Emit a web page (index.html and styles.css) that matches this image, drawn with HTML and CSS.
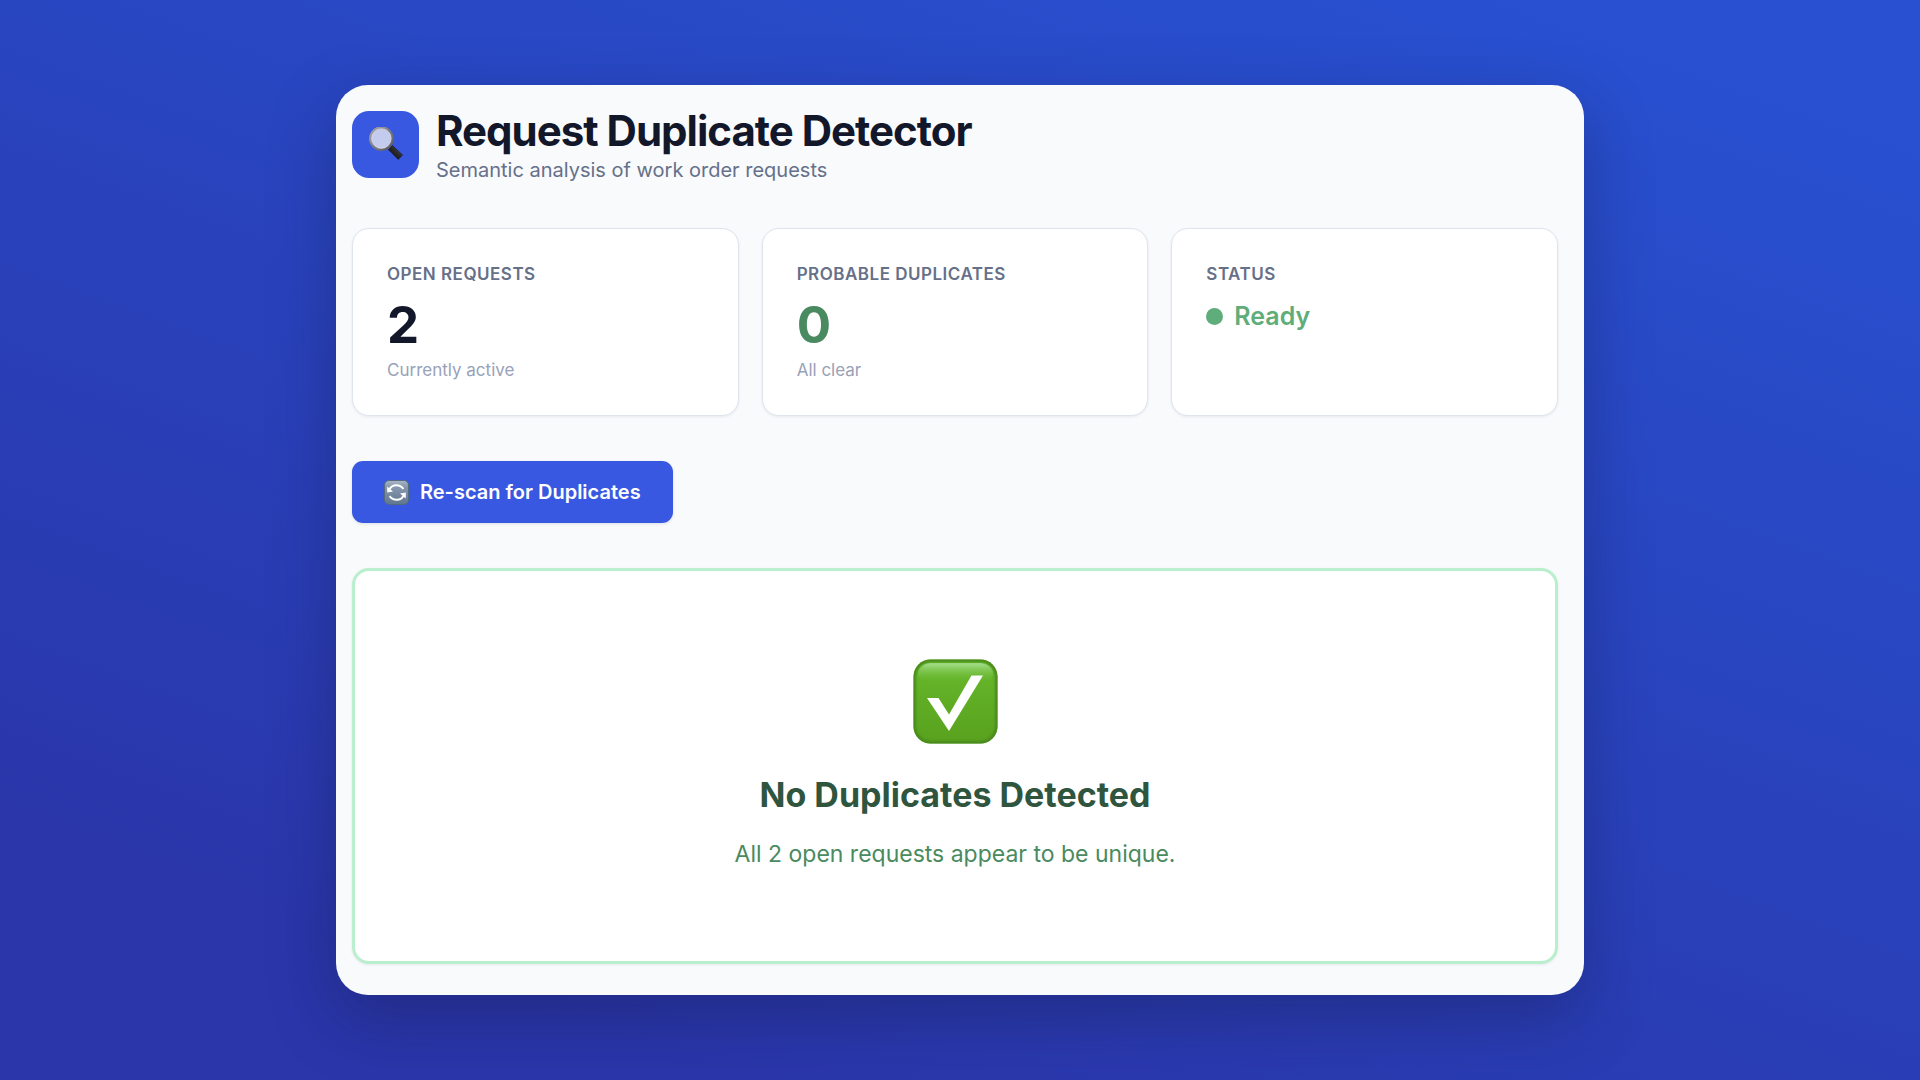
FILE: index.html
```html
<!DOCTYPE html>
<html lang="en">
<head>
<meta charset="utf-8">
<meta name="viewport" content="width=device-width, initial-scale=1">
<title>Request Duplicate Detector</title>
<link rel="stylesheet" href="styles.css">
</head>
<body>
<main class="app">
  <header class="header">
    <div class="logo">
      <svg class="logo-icon" viewBox="0 0 34 34" aria-hidden="true">
        <defs>
          <linearGradient id="rim" x1="0" y1="0" x2="1" y2="1">
            <stop offset="0" stop-color="#a9a9ad"/>
            <stop offset="1" stop-color="#55565a"/>
          </linearGradient>
          <linearGradient id="handle" x1="0" y1="1" x2="1" y2="0">
            <stop offset="0" stop-color="#0c0c0e"/>
            <stop offset=".55" stop-color="#2a2a2c"/>
            <stop offset="1" stop-color="#77777a"/>
          </linearGradient>
        </defs>
        <path d="M19.5 19.5 23 23" stroke="#77787c" stroke-width="3"/>
        <path d="M19.4 22.6 23.4 18.6 33.6 28 29.2 32.4z" fill="url(#handle)" stroke="#111" stroke-width=".6" stroke-linejoin="round"/>
        <circle cx="12.4" cy="11.6" r="11" fill="#c3ccee" stroke="url(#rim)" stroke-width="2.6"/>
        <circle cx="12.4" cy="11.6" r="9.8" fill="none" stroke="#e2e4f0" stroke-width=".7"/>
      </svg>
    </div>
    <div>
      <h1 class="title">Request Duplicate Detector</h1>
      <p class="subtitle">Semantic analysis of work order requests</p>
    </div>
  </header>

  <section class="stats">
    <article class="card">
      <h2 class="label">Open Requests</h2>
      <p class="value">2</p>
      <p class="note">Currently active</p>
    </article>
    <article class="card">
      <h2 class="label">Probable Duplicates</h2>
      <p class="value value-clear">0</p>
      <p class="note">All clear</p>
    </article>
    <article class="card">
      <h2 class="label">Status</h2>
      <p class="status"><span class="dot"></span>Ready</p>
    </article>
  </section>

  <button class="scan" type="button">
    <svg class="scan-icon" viewBox="0 0 25 25" aria-hidden="true">
      <defs>
        <linearGradient id="tile" x1="0" y1="0" x2="0" y2="1">
          <stop offset="0" stop-color="#a9b7c8"/>
          <stop offset=".25" stop-color="#8799af"/>
          <stop offset="1" stop-color="#5f7690"/>
        </linearGradient>
      </defs>
      <rect x=".5" y=".5" width="24" height="24" rx="4.5" fill="url(#tile)" stroke="#56697f"/>
      <path d="M5.6 9C8.4 4.2 15.6 3.800 19.400 8.800M19.4 16C16.600 20.800 9.400 21.200 5.600 16.200" fill="none" stroke="#fff" stroke-width="2"/>
      <path d="M3.2 6.400V12.600L9 11.400zM21.800 18.600V12.400L16 13.600z" fill="#fff"/>
    </svg>
    Re-scan for Duplicates
  </button>

  <section class="result">
    <svg class="result-icon" viewBox="0 0 85 85" aria-hidden="true">
      <defs>
        <linearGradient id="green" x1="0" y1="0" x2="0" y2="1">
          <stop offset="0" stop-color="#67b92b"/>
          <stop offset="1" stop-color="#58a11e"/>
        </linearGradient>
        <linearGradient id="gloss" x1="0" y1="0" x2="0" y2="1">
          <stop offset="0" stop-color="#a8df8f"/>
          <stop offset="1" stop-color="#67b92b" stop-opacity="0"/>
        </linearGradient>
        <filter id="soft"><feGaussianBlur stdDeviation="1"/></filter>
        <clipPath id="shape"><rect x=".5" y=".5" width="84" height="84" rx="17"/></clipPath>
      </defs>
      <g clip-path="url(#shape)">
        <rect width="85" height="85" fill="url(#green)"/>
        <rect x="5" y="4" width="75" height="20" rx="12" fill="url(#gloss)"/>
        <rect x="1" y="1" width="83" height="83" rx="17" fill="none" stroke="#4a8a1c" stroke-width="4" filter="url(#soft)"/>
      </g>
      <path d="M14 39H25.5L36 55.500 58.500 16.500H70L36 72z" fill="#fff"/>
    </svg>
    <h2 class="result-title">No Duplicates Detected</h2>
    <p class="result-text">All 2 open requests appear to be unique.</p>
  </section>
</main>
</body>
</html>
```
FILE: styles.css
```css
* {
  box-sizing: border-box;
  margin: 0;
}

body {
  min-height: 100vh;
  padding: 24px 0;
  display: flex;
  align-items: center;
  justify-content: center;
  font-family: Inter, "Liberation Sans", sans-serif;
  color: #13172a;
  background: linear-gradient(200deg, #2850d0 8%, #2a36aa 85%);
}

.app {
  width: 65%;
  padding: 20px 26px 31px 16px;
  border-radius: 32px;
  background: #f8fafc;
  box-shadow: 0 24px 64px rgba(20, 25, 70, 0.36);
}

.header {
  display: flex;
  align-items: center;
  gap: 17px;
  margin-bottom: 45px;
}

.logo {
  display: flex;
  align-items: center;
  justify-content: center;
  width: 67px;
  height: 67px;
  border-radius: 17px;
  background: #3858e2;
}

.logo-icon {
  width: 34px;
  height: 34px;
}

.title {
  font-size: 42px;
  line-height: 52px;
  font-weight: 700;
  letter-spacing: -1px;
}

.subtitle {
  font-size: 20px;
  line-height: 26px;
  color: #667089;
}

.stats {
  display: grid;
  grid-template-columns: repeat(3, 1fr);
  gap: 23px;
  margin-bottom: 45px;
}

.card {
  padding: 34px;
  border: 1px solid #e0e4ee;
  border-radius: 17px;
  background: #fff;
  box-shadow: 0 1px 3px rgba(20, 30, 60, 0.08);
}

.label {
  margin-bottom: 10px;
  font-size: 17px;
  line-height: 22px;
  font-weight: 600;
  text-transform: uppercase;
  letter-spacing: 0.5px;
  color: #667089;
}

.value {
  margin-bottom: 4px;
  font-size: 51px;
  line-height: 60px;
  font-weight: 700;
}

.value-clear {
  color: #4a8a60;
}

.note {
  font-size: 17px;
  line-height: 22px;
  color: #98a2b8;
}

.status {
  display: flex;
  align-items: center;
  gap: 11px;
  font-size: 25px;
  line-height: 42px;
  font-weight: 600;
  color: #5fad7a;
}

.dot {
  width: 17px;
  height: 17px;
  border-radius: 50%;
  background: #5fad7a;
}

.scan {
  display: flex;
  align-items: center;
  gap: 11px;
  margin-bottom: 45px;
  padding: 17px 32px;
  border: 0;
  border-radius: 11px;
  font: 600 20px/28px Inter, "Liberation Sans", sans-serif;
  color: #fff;
  background: #3858e2;
  box-shadow: 0 1px 3px rgba(20, 30, 60, 0.12);
  cursor: pointer;
}

.scan-icon {
  width: 25px;
  height: 25px;
}

.result {
  display: flex;
  flex-direction: column;
  align-items: center;
  padding: 88px 34px;
  border: 3px solid #b9efcc;
  border-radius: 17px;
  background: #fff;
  box-shadow: 0 1px 3px rgba(20, 30, 60, 0.08);
  text-align: center;
}

.result-icon {
  width: 85px;
  height: 85px;
  margin-bottom: 30px;
}

.result-title {
  margin-bottom: 19px;
  font-size: 34px;
  line-height: 42px;
  font-weight: 700;
  color: #2f553f;
}

.result-text {
  font-size: 23px;
  line-height: 38px;
  color: #4a8a60;
}
```
